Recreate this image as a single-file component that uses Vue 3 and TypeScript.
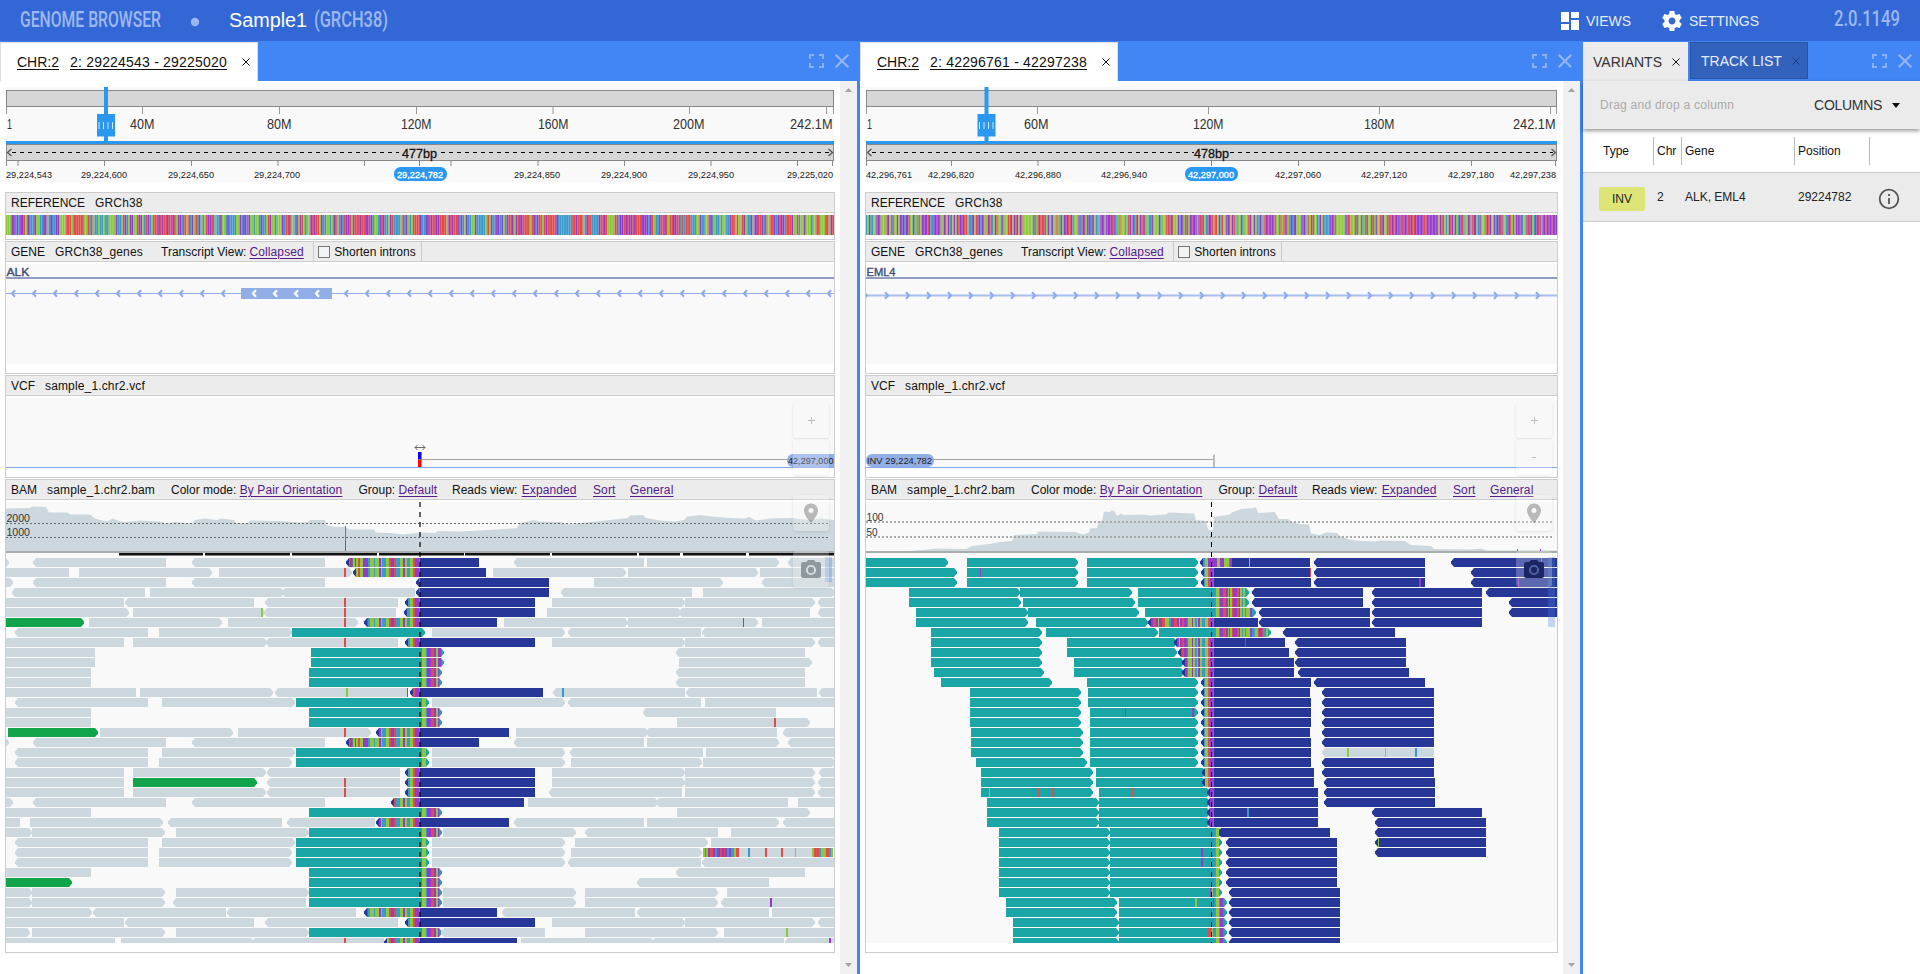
<script setup lang="ts">
type Segment = { x: number; w: number; fill: string }
type Span = { x: number; w: number; text: string }

const palette: Record<string, string> = {
  g: '#cdd8de',
  t: '#1aa5a7',
  T: '#1aa5a7',
  b: '#273797',
  B: '#273797',
  e: '#12a44a',
}
const bases: Record<string, string> = { r: '#e04b4b', g: '#8dc63f', b: '#3c98c8', p: '#953bcb' }

function parseRuns(source: string, end: number): Segment[] {
  const items = source.trim().split(/\s+/).map((s) => ({ fill: bases[s[0]], x: parseFloat(s.slice(1)) }))
  return items.map((it, i) => ({ fill: it.fill, x: it.x, w: (i + 1 < items.length ? items[i + 1].x : end) - it.x }))
}

function clip(segments: Segment[], from: number, to: number): Segment[] {
  return segments
    .map((s) => {
      const a = Math.max(s.x, from)
      const b = Math.min(s.x + s.w, to)
      return { fill: s.fill, x: a, w: b - a }
    })
    .filter((s) => s.w > 0)
}

function readPoints(x1: number, x2: number, dir: string, y: number): string {
  const b = y + 9
  const m = y + 4.5
  if (dir === '>') return `${x1},${y} ${x2 - 3},${y} ${x2},${m - 1} ${x2},${m + 1} ${x2 - 3},${b} ${x1},${b}`
  if (dir === '<') return `${x1 + 3},${y} ${x2},${y} ${x2},${b} ${x1 + 3},${b} ${x1},${m + 1} ${x1},${m - 1}`
  return `${x1},${y} ${x2},${y} ${x2},${b} ${x1},${b}`
}

/* Row syntax: <kind><direction><start>:<end> for a read, <base>@<x>:<width> for a mismatch. */
function buildReads(source: string, breakpoint: number, before: Segment[], after: Segment[]) {
  const reads: { points: string; fill: string }[] = []
  const marks: (Segment & { y: number })[] = []
  source
    .trim()
    .split('\n')
    .forEach((line, row) => {
      const y = 558 + row * 10
      for (const token of line.trim().split(/\s+/)) {
        const [a, b] = token.slice(2).split(':').map(Number)
        if (token[1] === '@') {
          marks.push({ x: a, w: b, fill: bases[token[0]], y })
          continue
        }
        reads.push({ points: readPoints(a, b, token[1], y), fill: palette[token[0]] })
        if (token[0] === 'b' && a < breakpoint) clip(before, a + 3, breakpoint).forEach((s) => marks.push({ ...s, y }))
        if (token[0] === 't' && b > breakpoint) clip(after, breakpoint, b - 3).forEach((s) => marks.push({ ...s, y }))
      }
    })
  return { reads, marks }
}

const leftRows = `
g>-10:9 g<33:166 g<192:325 b<346:479 g<514:644 g>647:779 g<788:840
g=0:69 g>79:212 g>219:352 r@344:2 b<353:486 g>493:626 g>628:758 g=760:840
g>-10:13 g<33:166 g<192:325 b<416:549 g>594:723 g<762:840
g<12:145 g>150:284 g<282:415 b<416:549 g<561:692 g>703:835
g=0:124 g<125:254 g<265:398 r@344:2 b<405:535 g>552:685 g>685:815 g<818:840
g>0:129 g>133:265 g<264:396 g@261:2 r@344:2 b<404:535 g>547:681 g<679:810 g<818:840
e>0:84 g>89:222 g>228:358 r@344:2 b<364:497 g>504:628 g>628:758 p@743:1 g=762:840
g<15:148 g>159:292 t>292:425 g>432:565 g<568:701 g<702:840
g=0:124 g>133:267 g<266:398 r@344:2 b<405:535 g>552:685 g>685:815 g<818:840
g=0:95 t>311:444 g<676:805
g=0:95 t>311:444 g>679:812
g=0:91 t>309:442 g<676:805
g=0:91 t>309:442 g<676:805
g=0:136 g>140:273 g<275:407 g@346:2 p@407:1 b<410:543 g<553:685 b@562:2 g<686:817 g<819:840
g<15:148 g>162:295 t>296:429 g>432:565 g<568:701 g=705:840
g=0:91 t>309:442 g<643:776
g=0:91 t>309:442 g>677:810 r@774:2
e>8:98 g>100:233 g>238:371 r@344:2 b<376:509 g>516:648 g<646:777 g<783:840
g>0:9 g<33:166 g<192:325 b<346:479 g<514:644 g>647:779 g<788:840
g<15:148 g>162:295 t>296:429 g>432:565 g<570:703 g=706:840
g<15:148 g>159:292 t>296:429 g>432:565 g>571:702 g>703:835
g=0:124 g>133:266 g<267:400 b<405:535 g>552:685 g>685:815 g<819:840
g=0:124 e>133:257 g<267:400 r@344:2 b<405:535 g>552:685 g>685:815 g<818:840
g=0:124 g>133:266 g<267:400 r@344:2 b<405:535 g<549:682 g>685:815 g<818:840
g>0:13 g<33:166 g<192:325 b<391:524 g>528:658 g<656:788 g=798:840
g=0:91 t>309:442 g>677:810
g=0:20 g>30:163 g<168:282 g<287:375 b<376:509 g<514:644 g>647:779 g<783:840
g>0:32 g>32:165 g>176:309 t>309:442 g>443:576 g<585:718 g=731:840
g<15:148 g>162:295 t>296:429 g>432:565 g>575:708 g=711:840
g<15:148 g>159:292 t>296:429 g>432:565 g>571:702 g=703:833 g@703:2 r@705:1 g@706:2 p@708:2 r@710:3 p@713:2 b@715:2 p@717:3 r@720:2 p@722:2 r@724:1 p@725:2 b@727:2 p@729:2 b@731:3 g@734:2 r@736:3 b@748:2 r@765:2 r@781:2 g@795:1 g@812:2 r@814:5 b@819:2 g@821:5 r@826:3 b@829:2 g@831:2
g<15:148 g>159:292 t>296:429 g>432:565 g<568:701 g<702:840
g=0:91 t>309:442 g<676:805
e>0:72 t>309:442 g<637:769
g>0:32 g>32:165 g>176:309 t>309:442 g>443:576 g>585:718 g=727:840
g>0:32 g>32:165 g<173:306 t>309:442 g>443:576 g>585:718 g<721:840 p@770:2
g>0:92 g<93:226 g<227:356 b<364:497 g<502:635 g<637:769 g=772:840
g=0:124 g<125:254 g<265:398 b<405:535 g>552:685 g>685:815 g<818:840
g>0:30 g>32:165 g>176:309 t>309:442 g<441:545 g>585:718 g=724:840 g@786:2
g=0:115 g>121:254 g<252:384 r@344:2 b<384:517 g>521:654 g<652:784 g<785:840 p@829:2`

const rightRows = `
t>860:948 t>967:1078 t>1087:1198 B<1200:1310 b@1203:2 g@1205:3 p@1208:9 g@1217:3 p@1220:4 g@1224:5 r@1229:1 p@1230:2 g@1249:1 B<1314:1425 B<1451:1560 r@1541:1
t>860:957 t>967:1078 p@980:1 t>1087:1198 b<1201:1311 r@1310:1 B<1314:1425 B<1471:1560
t>860:957 t>967:1078 t>1087:1198 b<1201:1311 B<1314:1425 p@1419:2 B<1471:1560 p@1518:1
t>909:1020 t>1020:1132 t>1138:1249 B<1252:1363 B<1372:1482 B<1486:1560
t>909:1021 t>1023:1135 t>1138:1249 B<1252:1363 B<1372:1482 B<1509:1560
t>916:1028 t>1028:1139 t>1145:1256 B<1259:1370 B<1372:1482 B<1509:1560
t>916:1028 t>1036:1148 b<1148:1258 B<1259:1370 B<1372:1482
t>931:1042 t>1046:1158 t>1159:1271 B<1283:1395
t>931:1042 t>1067:1177 b<1174:1285 p@1245:1 B<1295:1406
t>931:1042 t>1067:1177 b<1178:1289 B<1295:1406
t>931:1042 t>1074:1184 b<1182:1294 B<1295:1406
t>934:1044 t>1074:1184 b<1182:1294 B<1298:1409
t>941:1052 t>1087:1198 b<1201:1311 B<1314:1425
t>970:1081 t>1088:1198 b<1201:1310 B<1322:1434
t>970:1081 t>1088:1198 b<1201:1311 B<1322:1434
t>970:1081 t>1090:1198 p@1125:1 p@1192:2 b<1201:1311 B<1322:1434
t>970:1081 t>1090:1198 b<1201:1311 B<1322:1434
t>971:1083 t>1090:1198 b<1201:1310 B<1322:1434
t>971:1083 t>1090:1198 b<1201:1311 B<1322:1434
t>971:1083 t>1090:1198 b<1201:1311 g<1322:1434 g@1347:2 g@1385:1 b@1415:2
t>976:1087 t>1090:1198 b<1201:1311 B<1322:1434
t>981:1093 t>1096:1206 b<1202:1314 B<1322:1434
t>981:1093 t>1096:1206 b<1202:1314 B<1324:1435
t>981:1093 g@989:1 r@1038:1 r@1052:2 t>1099:1210 r@1132:1 b<1207:1318 B<1324:1435
t>987:1099 t>1099:1210 b<1207:1318 B<1324:1435
t>987:1099 t>1099:1210 b<1207:1318 b@1247:2 B<1372:1482
t>987:1099 t>1099:1210 b<1207:1318 B<1375:1486
t>999:1110 t>1110:1222 B<1218:1330 B<1375:1486
t>999:1110 t>1110:1222 B<1226:1337 B<1375:1486 g@1378:1
t>999:1110 t>1110:1222 p@1201:2 B<1226:1337 B<1375:1486
t>999:1110 t>1110:1222 p@1201:2 B<1226:1337
t>999:1110 t>1110:1222 B<1226:1337
t>999:1110 t>1110:1222 B<1226:1337
t>999:1110 t>1110:1222 p@1210:1 g@1212:1 B<1229:1340
t>1006:1117 t>1119:1227 g@1195:2 p@1213:1 B<1229:1340
t>1006:1117 t>1119:1227 B<1229:1340
t>1013:1119 t>1119:1227 B<1229:1340
t>1013:1119 t>1119:1227 r@1208:3 g@1212:1 B<1229:1340
t>1013:1119 t>1119:1227 B<1229:1340`

const leftBefore = parseRuns('r348.7 p350.7 g352.7 p355 g356 r358 g360 p363 b368 g370 b374 g375 p379 g381 b382 g386 r389 p391 r394 b396 g400 p403 g405 b407 g410 r413 p415 r419', 420)
const leftAfter = parseRuns('g422 b426 p427 r431 p434 g436 p438', 442)
const rightBefore = parseRuns('p1151 r1153 p1156 g1158 p1159 r1162 g1165 b1169 p1171 r1174 p1177 g1179 p1180 r1182 p1184 r1187 g1188 p1192 g1193 b1195 g1197 p1198 g1200 b1202 g1205 r1208 p1210 r1213', 1214)
const rightAfter = parseRuns('b1214 g1216 b1219 p1220 r1223 p1226 g1228 p1229 g1230 r1232 p1233 r1237 p1239 g1240 b1242 g1243 b1245 g1246 p1250 b1252 g1255 r1258 p1259 r1262 b1263 g1266', 1271)

const leftBases =
  'GGGPPBPBPPRGPBBBPGGBBPPGBPBBPPGGGGRRRGRRRRRRGGRBRGBBGBBGBBGGGGPBBGRPBGPPGGRPPGBRPBGRRRPRPRRPRRPRGPPBRRGRBPGRBPGBGRPPRBGBBPGGBPBBBBGGPBPPBPGGBGGBPBBGRPGGBGGGPBRRPGGBPGPRGBGGPRPRRGPBBGGBGPRGBPBRPPRGPRRRPRRPPRPBGGBPRPBBGPRBBBBGRBPGBGRRRRPBBPPRPRRPPRRRRGPRPRRPB' +
  'PBGPBBGGPBBBBBGRGPBBPPBPGBPRRPGPRPPRRRRGRPBPRRGRPRRRRRPBBBBBBBBRRPRRRGBPRRBBBBPRRPRGGGGRRBPPRPRPPRPRRRPPPPBPRGBBPRRPRGRRPPRRBRBRRRBBBGGPBBGGRPBGBBGBGGBBPRRGRGGRPGBBPGPPRRPBRGGRRPBPRPPBRRRPGGRBGGPGGGBGGRRGGGRRGPR'
const rightBases =
  'BGPBBGGPPPGGGGRPGBPGGPGPPPBPPRGGPBGRBGPPPPRPBBPPPPPGGPRGPBRGPGPRPPPRRGBBPPGRPPBPRGGPRRBGPRGGBPGGGRRPGPRPGPRGGGGGGGBPGRPRRPRGPGBPGGRGBPGPPPRRPBGGGPBRPPGPPBPRGBBGPPPGPPPPRPBBGRGGGBGRPGPBRPGPRRPGGBBPGGGGPBGGGRRBPRGGGPBPPGPRGPRPPPGPRPRGBRPPRGRRGPBRGGPP' +
  'RGPRGBGGPBGGGRPGGPGBBPBGRPPRPPBRGGBRGRRPGBPBPPGGGBPPBGRGPRGGBBPGRBBBBPPBRGGGGGGBPRRGGGRPGGRBGPRGGPRGPGGRPPGGPRRPRRPPBPRPPPRPPRRPPPPPPRRPPPPPPP' +
  'RGPRRGBGPRPGPGBPPRBGGPPGRPPGBPGGGRPRPGGPBPPRPGGBPPRGPGPPRPBGGPRPPGBPPRPGPPRPPPRPPP'

function strip(sequence: string, x: number, width: number) {
  const w = width / sequence.length
  return [...sequence].map((c, i) => ({ x: x + i * w, w, fill: bases[c.toLowerCase()] }))
}

const leftCoverage =
  '6,551 6,508.5 30,508 32,506.5 46,507 49,512.5 68,512.5 70,514.5 90,514.5 95,518.5 104,521 108,521 113,518.5 119,521 125,522 140,520.5 160,521.5 166,523.5 175,522 193,523.5 195,520 205,518.5 217,520 222,518.5 234,520 236,523 248,523 250,520.5 280,521 300,522.5 308,522 310,520 325,520 326,525 335,527 345,527 350,529.5 374,529.5 376,532.5 390,533 403,534.5 420,532.5 435,533 438,531 460,531.5 490,530 517,528 520,523 534,520 540,521.5 560,522 570,524.5 590,522 605,520.5 628,518 630,515.5 643,515 646,518 660,520.5 675,521.5 684,520 687,516.5 700,515 712,516.5 730,518 745,518.5 749,517 756,520.5 770,518.5 790,518 810,520 820,518.5 834,520 834,551'
const rightCoverage =
  '909,551 928,549.5 935,548.5 966,549 972,546 990,544 1000,542 1012,541 1014,535 1037,534 1038,531.5 1075,532 1083,534.5 1089,532.5 1090,528.5 1097,528 1099,521 1102,521 1104,511.5 1110,512 1111,510.5 1114,510.5 1117,516 1121,513.5 1124,515 1143,514.5 1150,515.5 1166,514.5 1169,512.5 1194,513.5 1196,520 1206,521 1208,529.5 1211,530.5 1213,530 1214,517 1230,514.5 1232,512.5 1241,509 1254,508 1256,507 1258,513 1275,512 1279,519 1288,519 1292,522 1300,524 1309,524.5 1311,533.5 1320,535 1326,532.5 1337,533 1340,536 1349,539.5 1362,541 1375,541.5 1380,540.5 1405,541 1411,545 1431,546 1434,549 1470,549.5 1481,548.5 1487,550.5 1557,550.5 1557,551'

const range = (from: number, to: number, step: number): number[] => {
  const out: number[] = []
  for (let v = from; v <= to; v += step) out.push(v)
  return out
}

const label = (x: number, w: number, text: string): Span => ({ x, w, text })

const panels = [
  {
    id: 'left',
    region: '2: 29224543 - 29225020',
    x0: 6,
    width: 828,
    gene: 'ALK',
    geneWidth: 23,
    geneY: 293.5,
    geneStroke: 1,
    geneColor: '#92aee7',
    flip: 1,
    arrows: [...range(11, 225, 21), ...range(344, 830, 21)],
    exon: { x: 241, w: 91, arrows: [252, 273, 294, 315] },
    bp: '477bp',
    centre: 419.5,
    bpGap: [399, 441],
    handle: 106,
    globalTicks: [6.5, 142.5, 279.5, 416.5, 553, 689.5, 826.5, 833.5],
    globalLabels: [label(7, 5, '1'), label(130, 24.5, '40M'), label(267, 24.5, '80M'), label(401, 30.5, '120M'), label(538, 30.5, '160M'), label(673, 31.5, '200M'), label(790, 42.5, '242.1M')],
    localTicks: [6.5, 18, 104.5, 191.5, 278, 364.5, 451, 538, 624.5, 711, 797.5, 832.5],
    localLabels: ['29,224,543@6', '29,224,600@81', '29,224,650@168', '29,224,700@254', '29,224,850@514', '29,224,900@601', '29,224,950@688', '29,225,020@787'],
    focus: '29,224,782',
    focusX: 394,
    coverage: leftCoverage,
    thresholds: [{ y: 523.5, text: '2000', w: 23.5 }, { y: 537.5, text: '1000', w: 23.5 }],
    thresholdWidth: 1,
    bars: [[119, 84], [205, 85], [292, 85], [379, 85], [465, 85], [552, 85], [639, 41], [683, 63], [749, 85]],
    data: buildReads(leftRows, 420, leftBefore, leftAfter),
    strip: strip(leftBases, 6, 828),
    thumb: { x: 825, h: 25 },
  },
  {
    id: 'right',
    region: '2: 42296761 - 42297238',
    x0: 866,
    width: 691,
    gene: 'EML4',
    geneWidth: 29,
    geneY: 295.5,
    geneStroke: 2,
    geneColor: '#a4bff0',
    flip: -1,
    arrows: range(868, 1541, 21),
    exon: null,
    bp: '478bp',
    centre: 1211.5,
    bpGap: [1194, 1230],
    handle: 986.5,
    globalTicks: [866.5, 1037.5, 1208.5, 1379.5, 1550.5, 1556.5],
    globalLabels: [label(867, 5, '1'), label(1024, 24.5, '60M'), label(1193, 30.5, '120M'), label(1364, 30.5, '180M'), label(1513, 42.5, '242.1M')],
    localTicks: [866.5, 951.5, 1038, 1124.5, 1298.5, 1384.5, 1471.5, 1555.5],
    localLabels: ['42,296,761@866', '42,296,820@928', '42,296,880@1015', '42,296,940@1101', '42,297,060@1275', '42,297,120@1361', '42,297,180@1448', '42,297,238@1510'],
    focus: '42,297,000',
    focusX: 1185,
    coverage: rightCoverage,
    thresholds: [{ y: 522, text: '100', w: 17 }, { y: 537, text: '50', w: 11 }],
    thresholdWidth: 2,
    bars: [] as number[][],
    data: buildReads(rightRows, 1214, rightBefore, rightAfter),
    strip: strip(rightBases, 866, 691),
    thumb: { x: 1548, h: 70 },
  },
]

const bamMenu = [
  { title: 'Color mode:', value: 'By Pair Orientation', cls: 'm-color' },
  { title: 'Group:', value: 'Default', cls: 'm-group' },
  { title: 'Reads view:', value: 'Expanded', cls: 'm-view' },
  { title: '', value: 'Sort', cls: 'm-sort' },
  { title: '', value: 'General', cls: 'm-general' },
]
</script>

<template>
  <div class="app">
    <header class="topbar">
      <svg class="brand" width="440" height="41">
        <text x="20" y="27" font-size="22" fill="#9db8ee" textLength="141" lengthAdjust="spacingAndGlyphs" class="narrow">GENOME BROWSER</text>
        <circle cx="195" cy="22" r="4.2" fill="#9db8ee" />
        <text x="229" y="27" font-size="20" fill="#fff" textLength="78" lengthAdjust="spacingAndGlyphs">Sample1</text>
        <text x="314" y="27" font-size="22" fill="#9db8ee" textLength="74" lengthAdjust="spacingAndGlyphs" class="narrow">(GRCH38)</text>
      </svg>
      <div class="actions">
        <svg width="18" height="18" viewBox="0 0 18 18" fill="#fff"><path d="M0 0h8v10H0zM10 0h8v6h-8zM0 12h8v6H0zM10 8h8v10h-8z" /></svg>
        <span class="act views">VIEWS</span>
        <svg class="gear" width="24" height="24" viewBox="0 0 24 24" fill="#fff"><path d="M19.43 12.98c.04-.32.07-.64.07-.98s-.03-.66-.07-.98l2.11-1.65c.19-.15.24-.42.12-.64l-2-3.46c-.12-.22-.39-.3-.61-.22l-2.49 1c-.52-.4-1.08-.73-1.69-.98l-.38-2.65C14.46 2.18 14.25 2 14 2h-4c-.25 0-.46.18-.49.42l-.38 2.65c-.61.25-1.17.59-1.69.98l-2.49-1c-.23-.09-.49 0-.61.22l-2 3.46c-.13.22-.07.49.12.64l2.11 1.65c-.04.32-.07.65-.07.98s.03.66.07.98l-2.11 1.65c-.19.15-.24.42-.12.64l2 3.46c.12.22.39.3.61.22l2.49-1c.52.4 1.08.73 1.69.98l.38 2.65c.03.24.24.42.49.42h4c.25 0 .46-.18.49-.42l.38-2.65c.61-.25 1.17-.59 1.69-.98l2.49 1c.23.09.49 0 .61-.22l2-3.46c.12-.22.07-.49-.12-.64l-2.11-1.65zM12 15.5c-1.93 0-3.5-1.57-3.5-3.5s1.57-3.5 3.5-3.5 3.5 1.57 3.5 3.5-1.57 3.5-3.5 3.5z" /></svg>
        <span class="act">SETTINGS</span>
        <svg class="version" width="86" height="41"><text x="0" y="26" font-size="22" fill="#9db8ee" textLength="66" lengthAdjust="spacingAndGlyphs" class="narrow">2.0.1149</text></svg>
      </div>
    </header>

    <main class="workspace">
      <section v-for="p in panels" :key="p.id" class="panel" :class="p.id">
        <div class="tabs">
          <div class="tab active">
            <span class="link chr">CHR:2</span>
            <span class="link region">{{ p.region }}</span>
            <svg width="8" height="8" viewBox="0 0 8 8" stroke="#111" stroke-width="1"><path d="M.5.5l7 7M7.5.5l-7 7" /></svg>
          </div>
          <div class="winctl">
            <svg width="15" height="14" viewBox="0 0 15 14" fill="none" stroke="#8ab1f8" stroke-width="2"><path d="M1 5V1h4M10 1h4v4M14 9v4h-4M5 13H1V9" /></svg>
            <svg width="14" height="14" viewBox="0 0 14 14" fill="none" stroke="#93b7f8" stroke-width="2"><path d="M.7.7l12.6 12.6M13.3.7L.7 13.3" /></svg>
          </div>
        </div>

        <div class="body">
          <div class="tracks">
            <svg class="ruler" :width="p.width" height="95" :viewBox="`${p.x0} 87 ${p.width} 95`">
              <rect :x="p.x0" y="87" :width="p.width" height="95" fill="#f9f9f9" />
              <rect :x="p.x0 + 0.5" y="90.5" :width="p.width - 1" height="16" fill="#d6d6d6" stroke="#888" />
              <line v-for="t in p.globalTicks" :key="'g' + t" :x1="t" :x2="t" y1="107" y2="114" stroke="#999" />
              <text v-for="l in p.globalLabels" :key="'gl' + l.x" :x="l.x" y="129" font-size="14" fill="#333" :textLength="l.w" lengthAdjust="spacingAndGlyphs">{{ l.text }}</text>
              <rect :x="p.handle - 2" y="87" width="4" height="55" fill="#2b98f0" />
              <rect :x="p.handle - 9" y="114" width="18" height="22.5" fill="#2b98f0" />
              <path :d="`M${p.handle - 7} 122v7m4.5-7v7m4.5-7v7m4.5-7v7`" stroke="#cfe6fb" stroke-width="1" />
              <rect :x="p.x0" y="141" :width="p.width" height="3" fill="#2b98f0" />
              <rect :x="p.x0 + 0.5" y="144.5" :width="p.width - 1" height="16" fill="#d6d6d6" stroke="#888" />
              <path :d="`M${p.x0 + 6} 152.5H${p.bpGap[0]}M${p.bpGap[1]} 152.5H${p.x0 + p.width - 4}`" stroke="#000" stroke-dasharray="4 4" />
              <path :d="`M${p.x0 + 5.5} 149l-4 3.5 4 3.5M${p.x0 + p.width - 5.5} 149l4 3.5-4 3.5`" stroke="#555" fill="none" stroke-width="1.3" />
              <text :x="p.centre" y="158" font-size="12.5" fill="#111" stroke="#111" stroke-width=".3" text-anchor="middle" textLength="35" lengthAdjust="spacingAndGlyphs">{{ p.bp }}</text>
              <line v-for="t in p.localTicks" :key="'t' + t" :x1="t" :x2="t" y1="161" y2="166" stroke="#888" />
              <line :x1="p.centre" :x2="p.centre" y1="161" y2="166" stroke="#2b98f0" />
              <text v-for="l in p.localLabels" :key="l" :x="Number(l.split('@')[1])" y="178" font-size="9.5" fill="#222" textLength="46" lengthAdjust="spacingAndGlyphs">{{ l.split('@')[0] }}</text>
              <rect :x="p.focusX" y="167" width="53" height="14" rx="6.5" fill="#2b98f0" />
              <text :x="p.focusX + 3" y="178" font-size="9.5" fill="#fff" stroke="#fff" stroke-width=".3" textLength="46" lengthAdjust="spacingAndGlyphs">{{ p.focus }}</text>
            </svg>

            <div class="track reference">
              <div class="thead"><span class="kind">REFERENCE</span><span class="tname">GRCh38</span></div>
              <svg class="canvas" :width="p.width" height="20" :viewBox="`${p.x0} 215 ${p.width} 20`">
                <rect v-for="(s, i) in p.strip" :key="i" :x="s.x" y="215" :width="s.w" height="20" :fill="s.fill" />
              </svg>
            </div>

            <div class="track genes">
              <div class="thead">
                <span class="kind">GENE</span><span class="tname gname">GRCh38_genes</span>
                <span class="tview">Transcript View:</span><span class="menu">Collapsed</span>
                <span class="introns"><i class="box"></i>Shorten introns</span>
              </div>
              <svg class="canvas" :width="p.width" height="100" :viewBox="`${p.x0} 264 ${p.width} 100`">
                <rect :x="p.x0" y="264" :width="p.width" height="100" fill="#f9f9f9" />
                <text :x="p.x0 + 0.5" y="276" font-size="11.5" fill="#3d4f7c" stroke="#3d4f7c" stroke-width=".4" :textLength="p.geneWidth" lengthAdjust="spacingAndGlyphs">{{ p.gene }}</text>
                <rect :x="p.x0" y="277" :width="p.width" height="2" fill="#8f9dbf" />
                <line :x1="p.x0" :x2="p.x0 + p.width" :y1="p.geneY" :y2="p.geneY" :stroke="p.geneColor" :stroke-width="p.geneStroke" />
                <path v-for="a in p.arrows" :key="a" :d="`M${a + 4 * p.flip} ${p.geneY - 3.2}l${-3 * p.flip} 3.2l${3 * p.flip} 3.2`" fill="none" stroke="#8eabe8" stroke-width="2.1" />
                <g v-if="p.exon">
                  <rect :x="p.exon.x" y="288" :width="p.exon.w" height="11" fill="#92aee7" />
                  <path v-for="a in p.exon.arrows" :key="a" :d="`M${a + 4} 290.2l-3 3.3l3 3.3`" fill="none" stroke="#fff" stroke-width="2.2" />
                </g>
              </svg>
            </div>

            <div class="track vcf">
              <div class="thead"><span class="kind">VCF</span><span class="tname">sample_1.chr2.vcf</span></div>
              <svg class="canvas" :width="p.width" height="70" :viewBox="`${p.x0} 398 ${p.width} 70`">
                <rect :x="p.x0" y="398" :width="p.width" height="70" fill="#f9f9f9" />
                <rect :x="p.x0" y="467" :width="p.width" height="1" fill="#87a8e8" />
                <g v-if="p.id === 'left'">
                  <path d="M415 447.5h10M417.5 445l-2.5 2.5 2.5 2.5M422.5 445l2.5 2.5-2.5 2.5" fill="none" stroke="#666" />
                  <rect x="421" y="459" width="367" height="1" fill="#a3a3a3" />
                  <rect x="418" y="452" width="3.5" height="7.5" fill="#0a00ff" />
                  <rect x="418" y="459.5" width="3.5" height="7.5" fill="#fb0606" />
                  <rect x="787" y="454" width="53" height="13" rx="6" fill="#92aee7" />
                  <text x="788" y="464" font-size="9.5" fill="#222" textLength="45.5" lengthAdjust="spacingAndGlyphs">42,297,000</text>
                </g>
                <g v-else>
                  <rect x="934" y="459" width="280" height="1" fill="#a3a3a3" />
                  <rect x="1213" y="454.5" width="2" height="12.5" fill="#bbb" />
                  <rect x="866" y="454" width="68" height="13" rx="6" fill="#92aee7" />
                  <text x="867" y="464" font-size="9.5" fill="#222" textLength="65" lengthAdjust="spacingAndGlyphs">INV 29,224,782</text>
                </g>
              </svg>
            </div>

            <div class="track bam">
              <div class="thead">
                <span class="kind">BAM</span><span class="tname">sample_1.chr2.bam</span>
                <span v-for="m in bamMenu" :key="m.value" :class="m.cls"><template v-if="m.title">{{ m.title }}&nbsp;</template><span class="menu">{{ m.value }}</span></span>
              </div>
              <svg class="canvas" :width="p.width" height="441" :viewBox="`${p.x0} 502 ${p.width} 441`">
                <rect :x="p.x0" y="502" :width="p.width" height="441" fill="#f9f9f9" />
                <polygon :points="p.coverage" fill="#cdd8de" />
                <g v-if="p.id === 'left'">
                  <rect x="345" y="526" width="1" height="15" fill="#e04b4b" />
                  <rect x="345" y="541" width="1" height="10" fill="#953bcb" />
                </g>
                <g v-else>
                  <rect x="1517" y="549" width="1" height="2" fill="#e04b4b" />
                  <rect x="1540" y="549" width="1" height="2" fill="#953bcb" />
                </g>
                <rect :x="p.x0" y="551" :width="p.width" height="2" fill="#a9adad" />
                <rect v-for="b in p.bars" :key="b[0]" :x="b[0]" y="553" :width="b[1]" height="2.5" fill="#111" />
                <g v-for="t in p.thresholds" :key="t.text">
                  <line :x1="p.x0" :x2="p.x0 + p.width - 5" :y1="t.y" :y2="t.y" :stroke="p.thresholdWidth === 1 ? '#666' : '#aaa'" :stroke-width="p.thresholdWidth" stroke-dasharray="2 2" />
                  <text :x="p.x0 + 0.5" :y="t.y - 1.5" font-size="10" fill="#333" :textLength="t.w" lengthAdjust="spacingAndGlyphs">{{ t.text }}</text>
                </g>
                <polygon v-for="(r, i) in p.data.reads" :key="'r' + i" :points="r.points" :fill="r.fill" />
                <rect v-for="(m, i) in p.data.marks" :key="'m' + i" :x="m.x" :y="m.y" :width="m.w" height="9" :fill="m.fill" />
                <line v-if="p.id === 'left'" x1="420" x2="420" y1="502" y2="943" stroke="#000" stroke-opacity=".6" stroke-width="2" stroke-dasharray="5 5" />
                <line v-else x1="1211.5" x2="1211.5" y1="502" y2="943" stroke="#000" stroke-dasharray="5 5" />
                <rect :x="p.thumb.x" y="557" width="7" :height="p.thumb.h" fill="#4d7fe0" fill-opacity=".3" />
              </svg>
            </div>

            <div class="tools">
              <div class="tool"><svg width="7" height="7" stroke="#bbb"><path d="M0 3.5h7M3.5 0v7" /></svg></div>
              <div class="tool second"><svg v-if="p.id === 'right'" width="5" height="3" stroke="#bbb"><path d="M0 1.5h4" /></svg></div>
              <div class="tool third"><svg width="26" height="22" viewBox="0 0 26 22"><path fill="#000" fill-opacity=".26" fill-rule="evenodd" d="M13 1.500c-3.900 0-7 3.100-7 7 0 5.200 7 12.500 7 12.500s7-7.300 7-12.500c0-3.900-3.100-7-7-7zm0 9.500a2.500 2.500 0 1 1 0-5 2.500 2.500 0 0 1 0 5z" /></svg></div>
              <div class="tool fourth">
                <svg width="20" height="18" viewBox="0 0 20 18">
                  <path :fill="p.id === 'left' ? '#8f989c' : '#1b2666'" d="M7 0L5.200 2H2C.9 2 0 2.900 0 4v12c0 1.100.9 2 2 2h16c1.100 0 2-.9 2-2V4c0-1.100-.9-2-2-2h-3.200L13 0z" />
                  <circle cx="10" cy="10" r="4.100" fill="none" stroke-width="1.900" :stroke="p.id === 'left' ? '#d8e0e4' : '#5865ab'" />
                </svg>
              </div>
            </div>
          </div>
          <div class="scroll">
            <svg width="7" height="4"><path d="M3.500 0L7 4H0z" fill="#a3a3a3" /></svg>
            <svg width="7" height="4"><path d="M0 0h7L3.500 4z" fill="#a3a3a3" /></svg>
          </div>
        </div>
      </section>

      <aside class="panel side">
        <div class="tabs">
          <div class="stab on"><span class="variants">VARIANTS</span><svg width="8" height="8" viewBox="0 0 8 8" stroke="#111"><path d="M.5.5l7 7M7.5.5l-7 7" /></svg></div>
          <div class="stab off"><span class="tracklist">TRACK LIST</span><svg width="8" height="8" viewBox="0 0 8 8" stroke="#1e3f85"><path d="M.5.5l7 7M7.5.5l-7 7" /></svg></div>
          <div class="winctl">
            <svg width="15" height="14" viewBox="0 0 15 14" fill="none" stroke="#8ab1f8" stroke-width="2"><path d="M1 5V1h4M10 1h4v4M14 9v4h-4M5 13H1V9" /></svg>
            <svg width="14" height="14" viewBox="0 0 14 14" fill="none" stroke="#93b7f8" stroke-width="2"><path d="M.7.7l12.6 12.6M13.3.7L.7 13.3" /></svg>
          </div>
        </div>
        <div class="toolbar">
          <span class="hint">Drag and drop a column</span>
          <span class="columns">COLUMNS</span>
          <svg width="8" height="5"><path d="M0 0h8L4 5z" fill="#111" /></svg>
        </div>
        <div class="grid ghead">
          <span class="c-type">Type</span><span>Chr</span><span>Gene</span><span>Position</span><span></span>
        </div>
        <div class="grid grow">
          <span class="c-badge"><b>INV</b></span><span>2</span><span>ALK, EML4</span><span>29224782</span>
          <span class="c-info"><svg width="22" height="22" viewBox="0 0 22 22" fill="none" stroke="#555" stroke-width="1.8"><circle cx="11" cy="11" r="9.300" /><path d="M11 10v6M11 6v2" /></svg></span>
        </div>
      </aside>
    </main>
  </div>
</template>

<style>
body {
  margin: 0;
  background: #fff;
  overflow: hidden;
}
</style>

<style scoped>
.app {
  width: 1920px;
  height: 974px;
  overflow: hidden;
  display: flex;
  flex-direction: column;
  font-family: 'Liberation Sans', Arial, sans-serif;
  font-size: 12px;
  color: #111;
}
.app * {
  box-sizing: border-box;
}
svg {
  display: block;
  flex: none;
}
.narrow {
  font-family: Roboto, 'Liberation Sans', sans-serif;
  font-weight: 500;
}
.topbar {
  height: 41px;
  flex: none;
  background: #3367d6;
  display: flex;
  justify-content: space-between;
}
.brand,
.ruler {
  overflow: visible;
}
.actions {
  display: flex;
  align-items: center;
  color: #fff;
  font-size: 14px;
}
.act {
  color: #e6edfb;
  width: 72px;
  margin-left: 5px;
}
.act.views {
  width: 45px;
  margin-left: 7px;
}
.gear {
  margin-left: 29px;
}
.version {
  margin-left: 73px;
}
.workspace {
  flex: 1;
  min-height: 0;
  display: flex;
  background: #4285f4;
}
.panel {
  display: flex;
  flex-direction: column;
  margin-right: 3px;
}
.left {
  width: 857px;
}
.right {
  width: 720px;
}
.side {
  width: 337px;
  margin-right: 0;
  background: #fff;
}
.tabs {
  height: 40px;
  flex: none;
  display: flex;
  background: #4285f4;
}
.tab {
  width: 258px;
  margin-top: 1px;
  background: #fff;
  border: 1px solid #ddd;
  border-bottom: 0;
  display: flex;
  align-items: center;
  padding-left: 16px;
  font-size: 14px;
}
.link {
  text-decoration: underline;
  text-underline-offset: 2px;
  white-space: nowrap;
}
.chr {
  width: 42px;
  margin-right: 11px;
}
.region {
  width: 157px;
  letter-spacing: 0.2px;
  margin-right: 15px;
}
.winctl {
  margin-left: auto;
  display: flex;
  align-items: center;
  gap: 11px;
  padding: 0 8px 0 0;
}
.body {
  flex: 1;
  min-height: 0;
  background: #fff;
  display: flex;
  justify-content: space-between;
}
.tracks {
  position: relative;
  padding: 6px 0 0 5px;
  display: flex;
  flex-direction: column;
  gap: 1px;
}
.ruler {
  margin: 0 1px 9px;
}
.track {
  border: 1px solid #ccc;
  background: #fff;
}
.reference {
  height: 48px;
}
.genes {
  height: 133px;
}
.vcf {
  height: 103px;
}
.bam {
  height: 474px;
}
.thead {
  height: 20px;
  background: #ececec;
  border-bottom: 1px solid #ccc;
  display: flex;
  align-items: center;
  padding-left: 5px;
  white-space: nowrap;
}
.canvas {
  margin-top: 2px;
}
.tname {
  margin-left: 10px;
  letter-spacing: 0.15px;
}
.gname {
  width: 106px;
}
.tview {
  width: 88.5px;
}
.menu {
  color: #551a8b;
  text-decoration: underline;
  text-underline-offset: 2px;
  letter-spacing: 0.1px;
}
.introns {
  margin-left: 9.5px;
  width: 109px;
  height: 19px;
  border: solid #ccc;
  border-width: 0 1px;
  display: flex;
  align-items: center;
  padding-left: 4px;
}
.box {
  width: 12px;
  height: 12px;
  border: 1px solid #767676;
  background: #f4f4f4;
  margin-right: 4px;
}
.bam .tname {
  width: 124px;
}
.m-color {
  width: 187.5px;
}
.m-group {
  width: 93.5px;
}
.m-view {
  width: 141px;
}
.m-view .menu {
  margin-left: 1px;
}
.m-sort {
  width: 37px;
}
.tools {
  position: absolute;
  right: 6px;
  top: 321px;
  width: 36px;
}
.tool {
  height: 36px;
  border-radius: 3px;
  background: rgba(249, 249, 249, 0.26);
  box-shadow: 0 1px 3px rgba(0, 0, 0, 0.1);
  display: flex;
  align-items: center;
  justify-content: center;
}
.second {
  margin-top: 1px;
}
.third {
  margin-top: 20px;
}
.fourth {
  margin-top: 20px;
}
.scroll {
  width: 17px;
  background: #f0f0f0;
  display: flex;
  flex-direction: column;
  align-items: center;
  justify-content: space-between;
  padding: 7px 0 7px;
}
.stab {
  display: flex;
  align-items: center;
  font-size: 14px;
  white-space: nowrap;
}
.on {
  width: 105px;
  margin-top: 1px;
  background: #ebebeb;
  padding-left: 10px;
  color: #333;
}
.variants {
  width: 79px;
}
.off {
  width: 118px;
  height: 37px;
  margin: 1px 0 0 2px;
  background: #3362bc;
  border: 1px solid #2a53a3;
  padding-left: 10px;
  color: #e8eefa;
}
.tracklist {
  width: 91px;
}
.toolbar {
  height: 48px;
  flex: none;
  background: #ebebeb;
  box-shadow: 0 2px 4px rgba(0, 0, 0, 0.4);
  display: flex;
  align-items: center;
  padding: 0 20px 0 17px;
}
.hint {
  color: #aaa;
  letter-spacing: 0.25px;
}
.columns {
  font-size: 14px;
  letter-spacing: -0.3px;
  margin: 0 10px 0 auto;
  color: #333;
}
.grid {
  display: grid;
  grid-template-columns: 71px 28px 113px 75px 50px;
}
.ghead {
  height: 44px;
  padding-top: 8px;
  border-bottom: 1px solid #ccc;
}
.ghead span {
  height: 28px;
  line-height: 29px;
  border-right: 1px solid #bbb;
  padding-left: 3px;
}
.ghead span:last-child {
  border: 0;
}
.ghead .c-type {
  padding-left: 20px;
}
.grow {
  height: 49px;
  background: #ebebeb;
  border-bottom: 1px solid #ccc;
  line-height: 48px;
  color: #222;
}
.grow span {
  padding-left: 3px;
}
.grow .c-badge {
  padding: 14px 0 0 16px;
}
.c-badge b {
  display: block;
  width: 46px;
  height: 24px;
  border-radius: 3px;
  background: #dde577;
  line-height: 24px;
  text-align: center;
  font-weight: 400;
}
.grow .c-info {
  padding: 15px 0 0 8px;
}
</style>
